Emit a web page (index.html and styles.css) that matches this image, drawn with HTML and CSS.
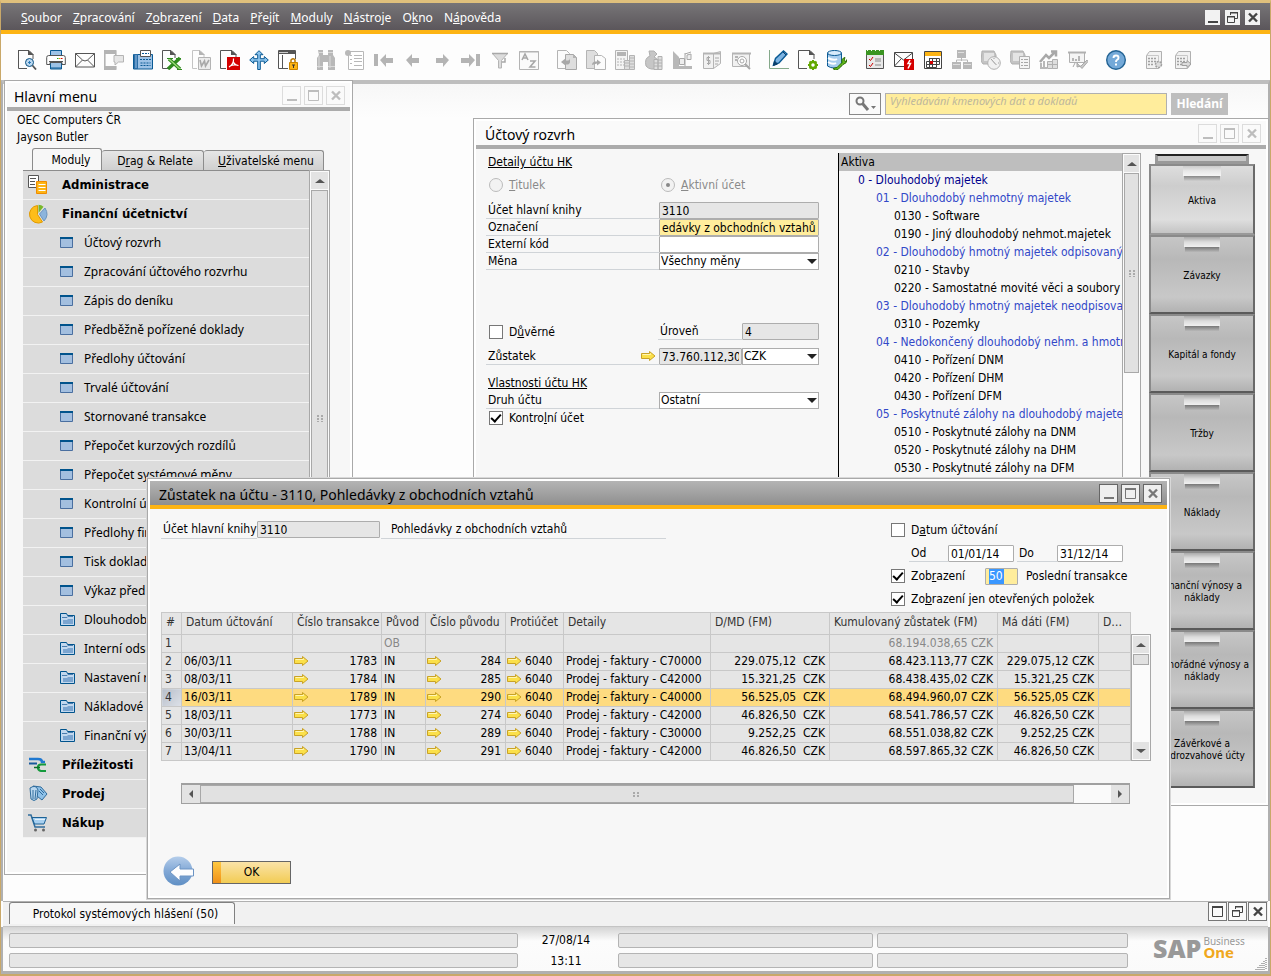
FILE: index.html
```html
<!DOCTYPE html>
<html lang="cs">
<head>
<meta charset="utf-8">
<title>SAP Business One</title>
<link rel="stylesheet" href="styles.css">
</head>
<body>
<svg class="defs" aria-hidden="true">
  <symbol id="arrow" viewBox="0 0 15 10"><path d="M.5 2.500h8V.500L14 5l-5.500 4.500v-2h-8z" fill="#fbe04a" stroke="#c9a227"/><path d="M1.500 3.500h8V2.500" fill="none" stroke="#fff6b5"/></symbol>
  <symbol id="win" viewBox="0 0 14 12"><path d="M.5.5h12v10H.5z" fill="#a3bfdf" stroke="#4a6fa0"/><path d="M0 0h13v2H0z" fill="#00538c"/></symbol>
  <symbol id="folder" viewBox="0 0 16 14"><path d="M.5 12.500V.5h6l1 2h7v10z" fill="#c2d8ee" stroke="#00538c"/><path d="M2 4.500h5l1-1h5" fill="none" stroke="#4a7dae"/><path d="M3 7h4l1-1h5v5H3z" fill="#7ba5d0"/></symbol>
  <symbol id="min" viewBox="0 0 15 15"><path d="M3 11h10v2H3z" fill="currentColor"/></symbol>
  <symbol id="max" viewBox="0 0 15 15"><path d="M2.500 2.500h10v10h-10z" fill="none" stroke="currentColor"/><path d="M2 2h11v2H2z" fill="currentColor"/></symbol>
  <symbol id="restore" viewBox="0 0 15 15"><path d="M5.500 5V2.500h7v6H10M2.500 6.500h7v6h-7z" fill="none" stroke="currentColor"/><path d="M5 2h8v1.500H5zM2 6h8v1.500H2z" fill="currentColor"/></symbol>
  <symbol id="close" viewBox="0 0 15 15"><path d="M4 3.500l8 8M12 3.500l-8 8" stroke="currentColor" stroke-width="2.400"/></symbol>
</svg>

<div class="app">
  <header class="menubar">
    <nav class="menus" aria-label="Hlavní nabídka">
      <button><u>S</u>oubor</button><button><u>Z</u>pracování</button><button>Z<u>o</u>brazení</button><button><u>D</u>ata</button><button><u>P</u>řejít</button><button><u>M</u>oduly</button><button><u>N</u>ástroje</button><button>O<u>k</u>no</button><button>N<u>á</u>pověda</button>
    </nav>
    <div class="winbtns dark">
      <button aria-label="Minimalizovat"><svg><use href="#min"/></svg></button>
      <button aria-label="Obnovit"><svg><use href="#restore"/></svg></button>
      <button aria-label="Zavřít"><svg><use href="#close"/></svg></button>
    </div>
  </header>

  <div class="toolbar" role="toolbar" aria-label="Nástroje">
    <div class="group">
      <button aria-label="Náhled"><svg viewBox="0 0 20 20"><path d="M1 .5h11l4 4V9M1.500 0v18.500H10" fill="none" stroke="#555"/><path d="M11 0v5h6z" fill="#555"/><circle cx="12.500" cy="12.500" r="4" fill="#bcd8f0" stroke="#0a4f80"/><path d="M11 12.500h3M12.500 11v3" stroke="#2c7bb8"/><path d="M15.500 15.500l3.500 4" stroke="#555" stroke-width="1.800"/></svg></button>
      <button aria-label="Tisk"><svg viewBox="0 0 20 20"><path d="M4.500 6V.5h11V6M4.500 13v6h11v-6" fill="#9cc2e6" stroke="#0a5a94"/><path d="M.7 7.500q0-2 2-2h14.600q2 0 2 2v7H16v-2H4v2H.7z" fill="#fff" stroke="#555"/><path d="M3 11.500h14" stroke="#555"/><path d="M11 8.500h1.500" stroke="#2a2"/><path d="M13 8.500h1.500" stroke="#e80"/><path d="M15 8.500h1.500" stroke="#d00"/><path d="M5 18h10" stroke="#0a5a94"/></svg></button>
      <button aria-label="E-mail"><svg viewBox="0 0 20 20"><path d="M.5 3.500h19v13.500H.5zM.5 3.500l7 6.500q2.500 2 5 0l7-6.500M.5 17l7-7M19.500 17l-7-7" fill="none" stroke="#555"/></svg></button>
      <button aria-label="SMS"><svg viewBox="0 0 20 20"><path d="M.8 1h11v4M.8 1v18h11v-3" fill="none" stroke="#b4b4b4" stroke-width="1.600"/><path d="M0 0h12v4H0zM0 16h12v4H0z" fill="#b4b4b4"/><path d="M11 5.500h8.500V12h-5L11 15v-3h-1V5.500z" fill="#e6e6e6" stroke="#b4b4b4"/></svg></button>
      <button aria-label="Fax"><svg viewBox="0 0 20 20"><path d="M.5 4.500h19V19H.5z" fill="#9cc2e6" stroke="#0a5a94"/><path d="M1 4h4v15H1z" fill="#2c6fa8"/><path d="M3 5v13" stroke="#9cc2e6"/><path d="M7.500 6.500v-6h10v6z" fill="#fff" stroke="#555"/><path d="M9 3.500h7M7 9.500h11M7.500 13h10M7.500 15.500h10" stroke="#0a5a94" stroke-dasharray="2 1"/></svg></button>
      <button aria-label="Excel"><svg viewBox="0 0 20 20"><path d="M6 18.500H.5V.5H9l4 4V8" fill="none" stroke="#555"/><path d="M8 0v5h6z" fill="#555"/><path d="M7 9l11 10M18 8L6 19" stroke="#2f8a1f" stroke-width="3.500"/><path d="M7 9l11 10" stroke="#9fdc7c" stroke-width="1.300"/><path d="M5 8.500h6M15 19.500h5M14 8.500h5" stroke="#2f8a1f"/></svg></button>
      <button aria-label="Word"><svg viewBox="0 0 20 20"><path d="M6 18.500H1.500V.5H9l4 4V7" fill="none" stroke="#c4c4c4"/><path d="M8 0v5h6z" fill="#b4b4b4"/><path d="M7.500 7.500h12v12h-12z" fill="#ececec" stroke="#b4b4b4"/><path d="M9 10l1.500 6 3-5 1 5 3.500-6" fill="none" stroke="#a8a8a8" stroke-width="1.600"/></svg></button>
      <button aria-label="PDF"><svg viewBox="0 0 20 20"><path d="M6 18.500H.5V.5H12l4 4V7" fill="none" stroke="#555"/><path d="M11 0v5h6z" fill="#555"/><path d="M7 7h13v13H7z" fill="#d40000"/><path d="M9 17q5-3 4.500-8.500M13 11q1 4 5.500 4.500M10 16q4-2 8-.7" fill="none" stroke="#fff" stroke-width="1.200"/></svg></button>
      <button aria-label="Přesunout"><svg viewBox="0 0 20 20"><path d="M10 .7l4 4h-2.700v4h4V6.500l4 3.500-4 3.500v-2.300h-4V16v3.500H8.700v-8.300h-4v2.300L.7 10l4-3.500v2.200h4v-4H6z" fill="#8cc4ee" stroke="#0a5a94"/></svg></button>
      <button aria-label="Uzamknout"><svg viewBox="0 0 20 20"><path d="M.5.5h17v18H.5z" fill="#fff" stroke="#555"/><path d="M1 1h17v3H1z" fill="#555"/><path d="M1 2.500h9" stroke="#ccc"/><path d="M4.500 5v13" stroke="#555"/><path d="M10 9h10v11H10z" fill="#fdfdfd"/><path d="M13 13v-3q2.500-2.500 4 0v3" fill="none" stroke="#b87700" stroke-width="1.500"/><path d="M11.500 12.500h8v7h-8z" fill="#fdb414" stroke="#c88400"/><path d="M14 15h3M15.500 15v3" stroke="#333"/></svg></button>
    </div>
    <div class="group off">
      <button disabled aria-label="Najít"><svg viewBox="0 0 20 20"><path d="M2 0h5v5h5V0h5v5l2 3v12h-7v-8H7v8H1V8l2-3z" fill="#b8b8b8"/><path d="M3 6v12M14 6v12M2 2.500h5M12 2.500h5M1 16.500h6M12 16.500h7" stroke="#dadada"/></svg></button>
      <button disabled aria-label="Seznam"><svg viewBox="0 0 20 20"><path d="M3.500 1.500h15v18h-15z" fill="#fff" stroke="#b8b8b8"/><path d="M5 5.500h2M5 9.500h2M5 13.500h2M9 5.500h8M9 8.500h8M9 11.500h8M9 15.500h8" stroke="#b8b8b8"/><circle cx="3" cy="3" r="3" fill="#b8b8b8"/></svg></button>
      <button disabled aria-label="První"><svg viewBox="0 0 20 20"><path d="M0 4h4v12H0zM6 10l6-6v4h7v5h-7v4z" fill="#b4b4b4"/></svg></button>
      <button disabled aria-label="Předchozí"><svg viewBox="0 0 20 20"><path d="M3 10l6-6v4h7v5H9v4z" fill="#b4b4b4"/></svg></button>
      <button disabled aria-label="Další"><svg viewBox="0 0 20 20"><path d="M17 10l-6-6v4H4v5h7v4z" fill="#b4b4b4"/></svg></button>
      <button disabled aria-label="Poslední"><svg viewBox="0 0 20 20"><path d="M19 4h-4v12h4zM14 10L8 4v4H0v5h8v4z" fill="#b4b4b4"/></svg></button>
      <button disabled aria-label="Filtr"><svg viewBox="0 0 20 20"><path d="M2.500 3.500h15l-6 7V18h-3v-7.500z" fill="#dcdcdc" stroke="#b4b4b4"/><path d="M2 3.500h16M12 12h3V8" stroke="#a8a8a8" stroke-width="1.500" fill="none"/></svg></button>
      <button disabled aria-label="Řadit"><svg viewBox="0 0 20 20"><path d="M.5 1.500h19v18H.5z" fill="#fafafa" stroke="#b4b4b4"/><path d="M0 2h20" stroke="#b4b4b4"/><path d="M3 10l3-6 3 6M4 8h4M11 11h5l-5 6h5.500" fill="none" stroke="#a8a8a8" stroke-width="1.600"/></svg></button>
    </div>
    <div class="group off">
      <button disabled aria-label="Základní doklad"><svg viewBox="0 0 20 20"><path d="M.5.5h9l3 3V18.500H.5z" fill="#fbfbfb" stroke="#b4b4b4"/><path d="M8.500 4.500h8l3 3v12h-11z" fill="#dedede" stroke="#a8a8a8"/><path d="M16 4v4h4z" fill="#b4b4b4"/><path d="M4 12l5-4v2.500h2q2 0 2-3v5q-1 2-2 2H9V16z" fill="#a8a8a8"/></svg></button>
      <button disabled aria-label="Cílový doklad"><svg viewBox="0 0 20 20"><path d="M.5.5h8l3 3v15H.5z" fill="#dedede" stroke="#b4b4b4"/><path d="M8.500 5.500h7l4 3v11h-11z" fill="#fbfbfb" stroke="#b4b4b4"/><path d="M6 15q0-3 3-3.500h2v-2l4 3-4 3v-2z" fill="#a8a8a8"/></svg></button>
      <button disabled aria-label="Hrubý zisk"><svg viewBox="0 0 20 20"><path d="M.5.5h12v19H.5z" fill="#f4f4f4" stroke="#b4b4b4"/><path d="M2 2h9v4H2z" fill="#b4b4b4"/><path d="M2 9h8M2 12h8M2 15h8" stroke="#b4b4b4" stroke-dasharray="2 1"/><path d="M9.500 10.500h5v9h-5zM14.500 5.500h5v14h-5z" fill="#dedede" stroke="#b4b4b4"/><path d="M10 13h4M10 16h4M15 8h4M15 11h4M15 14h4M15 17h4" stroke="#b4b4b4"/></svg></button>
      <button disabled aria-label="Platební prostředky"><svg viewBox="0 0 20 20"><path d="M5 1h5l3 3-3 3q6 2 5 11-9 3-13-2Q0 8 6 6z" fill="#c6c6c6" stroke="#b0b0b0"/><path d="M10 9.500h4v10h-4zM14 6.500h4v13h-4z" fill="#dedede" stroke="#b0b0b0"/><path d="M10 13h4M10 16h4M14 10h4M14 13h4M14 16h4" stroke="#b0b0b0"/></svg></button>
      <button disabled aria-label="Objem a hmotnost"><svg viewBox="0 0 20 20"><path d="M0 1l6 6v9h13v3H0z" fill="#b8b8b8"/><path d="M6.500 8.500h5v6h-5zM12 3v13M12 4l6-2M14 9.500V5l4-1v5.500z" fill="#eee" stroke="#a8a8a8"/></svg></button>
      <button disabled aria-label="Účet"><svg viewBox="0 0 20 20"><path d="M1.500 3.500h10v15h-10zM11.500 3.500l7-2v12l-7 5z" fill="#f1f1f1" stroke="#b4b4b4"/><path d="M1 3.500h18" stroke="#b4b4b4" stroke-width="2"/><path d="M8 7.500H5v3h3v3H5M6.500 6v9M13 8h4M13 11h4M13 14h3" fill="none" stroke="#a8a8a8"/></svg></button>
      <button disabled aria-label="Plán plateb"><svg viewBox="0 0 20 20"><path d="M1.500 3.500h17v13h-17z" fill="#f1f1f1" stroke="#b4b4b4"/><path d="M1 3.500h19M4 7h3M4 10h2" stroke="#b4b4b4" stroke-width="2"/><circle cx="11" cy="11" r="4.500" fill="#fff" stroke="#a8a8a8"/><circle cx="11" cy="11" r="2" fill="none" stroke="#a8a8a8"/><path d="M14 14l5 5" stroke="#a8a8a8" stroke-width="2"/></svg></button>
    </div>
    <div class="group">
      <button aria-label="Upravit"><svg viewBox="0 0 20 20"><path d="M.5 0v18.500H20" fill="none" stroke="#85a98a"/><path d="M4.500 15l2-6.500 8-7.500 3.500 3-8 9z" fill="#7db3e2" stroke="#0a5a94" stroke-width="1.400"/><path d="M4.500 15.500l1-4.500 3 3zM14 2l3 3" fill="#0a3f6c" stroke="#0a3f6c"/></svg></button>
      <button aria-label="Nastavení formuláře"><svg viewBox="0 0 20 20"><path d="M9 18.500H.5V.5H12l4 4V9" fill="none" stroke="#555"/><path d="M11 0v5h6z" fill="#555"/><circle cx="15" cy="15" r="3" fill="#fff" stroke="#62a800" stroke-width="2.500"/><path d="M15 10v2M15 18v2M10 15h2M18 15h2M11.500 11.500l1.500 1.500M17 17l1.500 1.500M18.500 11.500L17 13M13 17l-1.500 1.500" stroke="#62a800" stroke-width="2"/></svg></button>
      <button aria-label="Správce dotazů"><svg viewBox="0 0 20 20"><path d="M.5 3v13q6 4 14 0V3" fill="#a7cdee" stroke="#0a5a94"/><ellipse cx="7.500" cy="3" rx="7" ry="2.500" fill="#d7ebfb" stroke="#0a5a94"/><path d="M1 8q6 3 9 1M1 12q5 3 8 1" fill="none" stroke="#fff" stroke-width="2"/><path d="M6 18.500l4-1 5-5q-1-4 3-5l-1 3 2 1 1-2q0 4-4 5l-5 5q-3 2-5-1z" fill="#62b81c" stroke="#2d6e05"/></svg></button>
    </div>
    <div class="group">
      <button aria-label="Kalendář úkolů"><svg viewBox="0 0 20 20"><path d="M1.500 3.500h17v15h-17z" fill="#e8e8e8" stroke="#555"/><path d="M1 0h18v5H1z" fill="#3b9522"/><path d="M2 .5h16" stroke="#f6fff0" stroke-dasharray="1 3"/><path d="M4 9l1.500 1.500L8 7M4 15l1.500 1.500L8 13" fill="none" stroke="#c00"/><path d="M10 9h6M10 11h6M10 15h6" stroke="#888"/></svg></button>
      <button aria-label="Zprávy"><svg viewBox="0 0 20 20"><path d="M.5 2.500h18v14H.5zM.5 3l9 7 9-7M.5 16l6.500-7" fill="#fff" stroke="#444"/><path d="M10 9h10v11H10z" fill="#d40000"/><path d="M16 10l-2 3.500h2.500L14 18.500" fill="none" stroke="#fff" stroke-width="1.500"/></svg></button>
      <button aria-label="Kalendář"><svg viewBox="0 0 20 20"><path d="M1.500 1.500h17v17h-17z" fill="#fff" stroke="#444"/><path d="M2 2h16v4H2z" fill="#fdb414"/><path d="M6.500 8.500h10v3h-10zM3.500 11.500h13v3h-13zM3.500 14.500h10v3h-10zM9.500 8v9M13.500 8v9M6.500 8v9" fill="none" stroke="#444"/><path d="M7 11h3v3H7z" fill="#d40000"/></svg></button>
      <button disabled aria-label="Struktura"><svg viewBox="0 0 20 20"><path d="M5 0h9v8H5zM0 12h9v7H0zM11 12h9v7h-9z" fill="#b8b8b8"/><path d="M9.500 8v3M4.500 12v-2h11v2" fill="none" stroke="#b8b8b8"/><path d="M6 2.500h6M1 14.500h7M12 14.500h7" stroke="#dedede"/></svg></button>
      <button disabled aria-label="Panel"><svg viewBox="0 0 20 20"><path d="M1 1h12l2 4v9H2L0 11z" fill="#c4c4c4" stroke="#b0b0b0"/><path d="M3 3h10v8H3z" fill="#e4e4e4"/><circle cx="13" cy="13" r="6.300" fill="#f1f1f1" stroke="#b0b0b0"/><path d="M10 9l3.500 4 2 2M13 8v1M18 13h-1" stroke="#a0a0a0"/></svg></button>
      <button disabled aria-label="Dotazy"><svg viewBox="0 0 20 20"><path d="M1 1h12l2 4v9H2L0 11z" fill="#c4c4c4" stroke="#b0b0b0"/><path d="M3 3h10v8H3z" fill="#e4e4e4"/><path d="M9.500 6.500h10v12h-10z" fill="#f4f4f4" stroke="#b0b0b0"/><path d="M11 9.500h2M14 9.500h4M11 12.500h2M14 12.500h4M11 15.500h2M14 15.500h4" stroke="#a8a8a8"/></svg></button>
      <button disabled aria-label="Analýza"><svg viewBox="0 0 20 20"><path d="M1 12L7 5l3 3 6-6M12 1.500h5v5" fill="none" stroke="#a8a8a8" stroke-width="2.500"/><path d="M2 13v5h6M5 11v7" stroke="#b8b8b8" stroke-width="2" fill="none"/><path d="M8.500 11.500h5v7h-5zM13.500 9.500h5v9h-5z" fill="#dedede" stroke="#b0b0b0"/><path d="M9 14.500h9" stroke="#b0b0b0"/></svg></button>
      <button disabled aria-label="Prezentace"><svg viewBox="0 0 20 20"><path d="M1.500 2.500h15v10h-15z" fill="#f4f4f4" stroke="#b0b0b0"/><path d="M0 2.500h18" stroke="#b0b0b0" stroke-width="2"/><path d="M5 8v3M8 9v2M11 6v5" stroke="#a0a0a0" stroke-width="1.500"/><path d="M7 13l-2 4M9 13v4l4-1 6-6 1 1.500-6 7z" fill="#c8c8c8" stroke="#a8a8a8"/></svg></button>
    </div>
    <div class="group">
      <button aria-label="Nápověda"><svg viewBox="0 0 20 20"><circle cx="10" cy="10" r="9.300" fill="#74a9d8" stroke="#236394" stroke-width="1.400"/><path d="M7.500 8q0-2.500 2.500-2.500t2.500 2.200q0 1.300-1.300 2.100T10 12" fill="none" stroke="#fff" stroke-width="1.900"/><path d="M9 13.500h2v2H9z" fill="#fff"/></svg></button>
    </div>
    <div class="group">
      <button aria-label="Nastavení modulu"><svg viewBox="0 0 20 20"><path d="M2.500 5.500l3-4h12v13l-3 4h-12z" fill="#f2f2f2" stroke="#b0b0b0"/><path d="M3 5.500h11.500v12" fill="none" stroke="#c8c8c8"/><path d="M4 8.500h9M4 11.500h9M4 14.500h6" stroke="#a0a0a0" stroke-width="1.500" stroke-dasharray="2 1"/><circle cx="14.500" cy="14.500" r="3" fill="#ddd" stroke="#a0a0a0" stroke-width="1.500" stroke-dasharray="2 1"/></svg></button>
      <button aria-label="Export modulu"><svg viewBox="0 0 20 20"><path d="M2.500 5.500l3-4h12v13l-3 4h-12z" fill="#f2f2f2" stroke="#b0b0b0"/><path d="M3 5.500h11.500v12" fill="none" stroke="#c8c8c8"/><path d="M4 8.500h9M4 11.500h9M4 14.500h5" stroke="#a0a0a0" stroke-width="1.500" stroke-dasharray="2 1"/><path d="M9 12.500h5v-2l4 3.500-4 3.500v-2H9z" fill="#ddd" stroke="#a0a0a0"/></svg></button>
    </div>
  </div>

  <main class="desktop">
    <form class="search" role="search">
      <button type="button" class="lens" aria-label="Rozsah hledání"><svg viewBox="0 0 24 18"><circle cx="7" cy="6" r="3.500" fill="none" stroke="#777" stroke-width="2"/><path d="M9.500 8.500L15 15" stroke="#777" stroke-width="3"/><path d="M18 11h5l-2.500 3z" fill="#777"/></svg></button>
      <input type="text" aria-label="Hledaný výraz" placeholder="Vyhledávání kmenových dat a dokladů">
      <button type="button" class="go">Hledání</button>
    </form>

    <section class="window main-menu">
      <div class="titlebar"><h2>Hlavní menu</h2>
        <div class="winbtns light"><button aria-label="Minimalizovat"><svg><use href="#min"/></svg></button><button aria-label="Maximalizovat"><svg><use href="#max"/></svg></button><button aria-label="Zavřít"><svg><use href="#close"/></svg></button></div>
      </div>
      <div class="who">OEC Computers ČR<br>Jayson Butler</div>
      <div class="tabs" role="tablist">
        <button role="tab" class="tab on t1" aria-selected="true">Modu<u>l</u>y</button><button role="tab" class="tab t2">D<u>r</u>ag &amp; Relate</button><button role="tab" class="tab t3"><u>U</u>živatelské menu</button>
      </div>
      <div class="modules">
        <ul>
          <li><button class="mod"><svg viewBox="0 0 20 20"><path d="M.5.5h10v12H.5z" fill="#fff" stroke="#555"/><path d="M2 3.500h6M2 6.500h5M2 9.500h5" stroke="#555"/><path d="M8.500 6.500h10v12h-10z" fill="#fdb414" stroke="#f08c00"/><path d="M10.500 9.500h7M10.500 12.500h7M10.500 15.500h7" stroke="#fff"/></svg>Administrace</button></li>
          <li><button class="mod"><svg viewBox="0 0 20 20"><path d="M9.500 10.500V1.500A8.800 8.800 0 1 0 14.500 18z" fill="#fdbd1a" stroke="#e09a00"/><path d="M10.500 9V.8q3 0 5 2z" fill="#78b82a"/><path d="M11.500 10L17 4q4.500 7-1 13z" fill="#8cb4dc" stroke="#6a94be"/></svg>Finanční účetnictví</button></li>
          <li><button><svg class="w"><use href="#win"/></svg>Účtový rozvrh</button></li>
          <li><button><svg class="w"><use href="#win"/></svg>Zpracování účtového rozvrhu</button></li>
          <li><button><svg class="w"><use href="#win"/></svg>Zápis do deníku</button></li>
          <li><button><svg class="w"><use href="#win"/></svg>Předběžně pořízené doklady</button></li>
          <li><button><svg class="w"><use href="#win"/></svg>Předlohy účtování</button></li>
          <li><button><svg class="w"><use href="#win"/></svg>Trvalé účtování</button></li>
          <li><button><svg class="w"><use href="#win"/></svg>Stornované transakce</button></li>
          <li><button><svg class="w"><use href="#win"/></svg>Přepočet kurzových rozdílů</button></li>
          <li><button><svg class="w"><use href="#win"/></svg>Přepočet systémové měny</button></li>
          <li><button><svg class="w"><use href="#win"/></svg>Kontrolní účty</button></li>
          <li><button><svg class="w"><use href="#win"/></svg>Předlohy finančních výkazů</button></li>
          <li><button><svg class="w"><use href="#win"/></svg>Tisk dokladů</button></li>
          <li><button><svg class="w"><use href="#win"/></svg>Výkaz předkontací</button></li>
          <li><button><svg class="f"><use href="#folder"/></svg>Dlouhodobý majetek</button></li>
          <li><button><svg class="f"><use href="#folder"/></svg>Interní odsouhlasení</button></li>
          <li><button><svg class="f"><use href="#folder"/></svg>Nastavení rozpočtu</button></li>
          <li><button><svg class="f"><use href="#folder"/></svg>Nákladové účetnictví</button></li>
          <li><button><svg class="f"><use href="#folder"/></svg>Finanční výkazy</button></li>
          <li><button class="mod"><svg viewBox="0 0 20 20"><path d="M1 8.500h8" stroke="#1a5a9c" stroke-width="2"/><path d="M1 4h9q4 0 4 3h3" fill="none" stroke="#1f78d0" stroke-width="2.500"/><path d="M18 9.500h-5q-3 0-3 3t3 3.500h5" fill="none" stroke="#149a3c" stroke-width="2.200"/><path d="M6 12.500h6" stroke="#0e6e2a" stroke-width="1.500"/></svg>Příležitosti</button></li>
          <li><button class="mod"><svg viewBox="0 0 20 20"><path d="M5 2l8 1 6 7-5 6-9-7z" fill="#8fc1e8" stroke="#2f6c9c"/><path d="M2 4q6-4 8 2l-1 9q-3 3-6 0z" fill="#b9d7ef" stroke="#2f6c9c"/><path d="M5 6v9M8 6l-1 9M11 7l4 4M12 5l4 4" stroke="#2f6c9c"/></svg>Prodej</button></li>
          <li><button class="mod"><svg viewBox="0 0 20 20"><path d="M0 2h3l4 12h10" fill="none" stroke="#2f6c9c" stroke-width="1.500"/><path d="M4 4.500h14.500L16 11H6.500z" fill="#a8d0f0" stroke="#1c6296"/><path d="M7 6.500h10" stroke="#e4f2fc"/><circle cx="7.500" cy="17" r="1.500" fill="#666"/><circle cx="15.500" cy="17" r="1.500" fill="#666"/></svg>Nákup</button></li>
        </ul>
        <div class="vscroll"><button class="up" aria-label="Nahoru"></button><div class="thumb tall"><i class="grip"></i></div></div>
      </div>
    </section>

    <section class="window accounts">
      <div class="titlebar"><h2>Účtový rozvrh</h2>
        <div class="winbtns light"><button aria-label="Minimalizovat"><svg><use href="#min"/></svg></button><button aria-label="Maximalizovat"><svg><use href="#max"/></svg></button><button aria-label="Zavřít"><svg><use href="#close"/></svg></button></div>
      </div>
      <div class="accounts-body">
        <form class="details">
          <h3><u>Detaily účtu HK</u></h3>
          <div class="row radios"><label class="half"><input type="radio" name="kind" disabled><span><u>T</u>itulek</span></label><label><input type="radio" name="kind" checked disabled><span><u>A</u>ktivní účet</span></label></div>
          <div class="row"><label class="lab" for="gl">Účet hlavní knihy</label><input id="gl" class="box ro" value="3110" readonly></div>
          <div class="row"><label class="lab" for="nm">Označení</label><input id="nm" class="box hot" value="edávky z obchodních vztahů"></div>
          <div class="row"><label class="lab" for="ext">Externí kód</label><input id="ext" class="box"></div>
          <div class="row"><label class="lab" for="cur">Měna</label><span class="select"><select id="cur"><option>Všechny měny</option></select></span></div>
          <div class="row level"><label class="half"><input type="checkbox"><span>D<u>ů</u>věrné</span></label><label class="lab" for="lvl">Úroveň</label><input id="lvl" class="box ro" value="4" readonly></div>
          <div class="row balance"><label class="lab" for="bal">Zůstatek<svg class="arr"><use href="#arrow"/></svg></label><input id="bal" class="box ro amount" value="73.760.112,30" readonly><span class="select"><select aria-label="Měna zůstatku"><option>CZK</option></select></span></div>
          <h3 class="props"><u>Vlastnosti účtu HK</u></h3>
          <div class="row"><label class="lab" for="typ">Druh účtu</label><span class="select"><select id="typ"><option>Ostatní</option></select></span></div>
          <div class="row"><label class="half"><input type="checkbox" checked><span>Kontro<u>l</u>ní účet</span></label></div>
        </form>
        <div class="tree">
          <ul>
            <li class="l0">Aktiva</li>
            <li class="l1">0 - Dlouhodobý majetek</li>
            <li class="l2">01 - Dlouhodobý nehmotný majetek</li>
            <li class="l3">0130 - Software</li>
            <li class="l3">0190 - Jiný dlouhodobý nehmot.majetek</li>
            <li class="l2">02 - Dlouhodobý hmotný majetek odpisovaný</li>
            <li class="l3">0210 - Stavby</li>
            <li class="l3">0220 - Samostatné movité věci a soubory</li>
            <li class="l2">03 - Dlouhodobý hmotný majetek neodpisovaný</li>
            <li class="l3">0310 - Pozemky</li>
            <li class="l2">04 - Nedokončený dlouhodobý nehm. a hmotný majetek</li>
            <li class="l3">0410 - Pořízení DNM</li>
            <li class="l3">0420 - Pořízení DHM</li>
            <li class="l3">0430 - Pořízení DFM</li>
            <li class="l2">05 - Poskytnuté zálohy na dlouhodobý majetek</li>
            <li class="l3">0510 - Poskytnuté zálohy na DNM</li>
            <li class="l3">0520 - Poskytnuté zálohy na DHM</li>
            <li class="l3">0530 - Poskytnuté zálohy na DFM</li>
          </ul>
          <div class="vscroll"><button class="up" aria-label="Nahoru"></button><div class="thumb mid"><i class="grip"></i></div></div>
        </div>
        <div class="drawers">
          <div class="lid"></div>
          <button class="open">Aktiva</button><button>Závazky</button><button>Kapitál a fondy</button><button>Tržby</button><button>Náklady</button><button>Finanční výnosy a náklady</button><button>Mimořádné výnosy a náklady</button><button>Závěrkové a podrozvahové účty</button>
        </div>
      </div>
    </section>

    <section class="window dialog">
      <div class="titlebar active"><h2>Zůstatek na účtu - 3110, Pohledávky z obchodních vztahů</h2>
        <div class="winbtns mid"><button aria-label="Minimalizovat"><svg><use href="#min"/></svg></button><button aria-label="Maximalizovat"><svg><use href="#max"/></svg></button><button aria-label="Zavřít"><svg><use href="#close"/></svg></button></div>
      </div>
      <div class="dialog-body">
        <div class="filters">
          <div class="account"><label class="lab" for="acc">Účet hlavní knihy</label><input id="acc" class="box ro" value="3110" readonly><span class="name">Pohledávky z obchodních vztahů</span></div>
          <div class="options">
            <label class="opt"><input type="checkbox"><span>D<u>a</u>tum účtování</span></label>
            <div class="dates"><label class="lab" for="od">Od</label><input id="od" class="box" value="01/01/14"><label class="lab" for="do">Do</label><input id="do" class="box" value="31/12/14"></div>
            <div class="opt last"><label><input type="checkbox" checked><span>Zob<u>r</u>azení</span></label><input id="cnt" class="box count" value="50"><label for="cnt">Poslední transakce</label></div>
            <label class="opt"><input type="checkbox" checked><span>Zo<u>b</u>razení jen otevřených položek</span></label>
          </div>
        </div>
        <div class="grid">
          <table>
            <colgroup><col class="c1"><col class="c2"><col class="c3"><col class="c4"><col class="c5"><col class="c6"><col class="c7"><col class="c8"><col><col class="c10"><col class="c11"></colgroup>
            <thead><tr><th>#</th><th>Datum účtování</th><th>Číslo transakce</th><th>Původ</th><th>Číslo původu</th><th>Protiúčet</th><th>Detaily</th><th>D/MD (FM)</th><th>Kumulovaný zůstatek (FM)</th><th>Má dáti (FM)</th><th>D…</th></tr></thead>
            <tbody>
              <tr class="dim"><td>1</td><td></td><td></td><td>OB</td><td></td><td></td><td></td><td></td><td class="n">68.194.038,65 CZK</td><td></td><td></td></tr>
              <tr><td>2</td><td>06/03/11</td><td class="n"><svg class="arr"><use href="#arrow"/></svg>1783</td><td>IN</td><td class="n"><svg class="arr"><use href="#arrow"/></svg>284</td><td><svg class="arr"><use href="#arrow"/></svg>6040</td><td>Prodej - faktury - C70000</td><td class="n">229.075,12&nbsp; CZK</td><td class="n">68.423.113,77 CZK</td><td class="n">229.075,12 CZK</td><td></td></tr>
              <tr><td>3</td><td>08/03/11</td><td class="n"><svg class="arr"><use href="#arrow"/></svg>1784</td><td>IN</td><td class="n"><svg class="arr"><use href="#arrow"/></svg>285</td><td><svg class="arr"><use href="#arrow"/></svg>6040</td><td>Prodej - faktury - C42000</td><td class="n">15.321,25&nbsp; CZK</td><td class="n">68.438.435,02 CZK</td><td class="n">15.321,25 CZK</td><td></td></tr>
              <tr class="sel"><td>4</td><td>16/03/11</td><td class="n"><svg class="arr"><use href="#arrow"/></svg>1789</td><td>IN</td><td class="n"><svg class="arr"><use href="#arrow"/></svg>290</td><td><svg class="arr"><use href="#arrow"/></svg>6040</td><td>Prodej - faktury - C40000</td><td class="n">56.525,05&nbsp; CZK</td><td class="n">68.494.960,07 CZK</td><td class="n">56.525,05 CZK</td><td></td></tr>
              <tr><td>5</td><td>18/03/11</td><td class="n"><svg class="arr"><use href="#arrow"/></svg>1773</td><td>IN</td><td class="n"><svg class="arr"><use href="#arrow"/></svg>274</td><td><svg class="arr"><use href="#arrow"/></svg>6040</td><td>Prodej - faktury - C42000</td><td class="n">46.826,50&nbsp; CZK</td><td class="n">68.541.786,57 CZK</td><td class="n">46.826,50 CZK</td><td></td></tr>
              <tr><td>6</td><td>30/03/11</td><td class="n"><svg class="arr"><use href="#arrow"/></svg>1788</td><td>IN</td><td class="n"><svg class="arr"><use href="#arrow"/></svg>289</td><td><svg class="arr"><use href="#arrow"/></svg>6040</td><td>Prodej - faktury - C30000</td><td class="n">9.252,25&nbsp; CZK</td><td class="n">68.551.038,82 CZK</td><td class="n">9.252,25 CZK</td><td></td></tr>
              <tr><td>7</td><td>13/04/11</td><td class="n"><svg class="arr"><use href="#arrow"/></svg>1790</td><td>IN</td><td class="n"><svg class="arr"><use href="#arrow"/></svg>291</td><td><svg class="arr"><use href="#arrow"/></svg>6040</td><td>Prodej - faktury - C42000</td><td class="n">46.826,50&nbsp; CZK</td><td class="n">68.597.865,32 CZK</td><td class="n">46.826,50 CZK</td><td></td></tr>
            </tbody>
          </table>
          <div class="vscroll"><button class="up" aria-label="Nahoru"></button><div class="thumb tiny"></div><button class="down" aria-label="Dolů"></button></div>
        </div>
        <div class="hscroll"><button class="left" aria-label="Doleva"></button><div class="hthumb"><i class="grip wide"></i></div><button class="right" aria-label="Doprava"></button></div>
        <div class="actions">
          <button class="back" aria-label="Zpět"><svg viewBox="0 0 32 32"><defs><linearGradient id="ball" x2="0" y2="1"><stop offset="0" stop-color="#b4cdea"/><stop offset=".5" stop-color="#82a8d6"/><stop offset="1" stop-color="#5f8fc4"/></linearGradient></defs><circle cx="16" cy="15" r="14.500" fill="url(#ball)"/><path d="M8 16l10-8v5h13.500v7H18v5z" fill="#fdfdfe" stroke="#6c94c4"/></svg></button>
          <button class="ok">OK</button>
        </div>
      </div>
    </section>
  </main>

  <div class="messages">
    <button class="log">Protokol systémových hlášení (50)</button>
    <div class="winbtns box3"><button aria-label="Maximalizovat"><svg><use href="#max"/></svg></button><button aria-label="Obnovit"><svg><use href="#restore"/></svg></button><button aria-label="Zavřít"><svg><use href="#close"/></svg></button></div>
  </div>
  <footer class="status">
    <div class="s1"><i></i><i></i></div>
    <div class="clock"><span>27/08/14</span><span>13:11</span></div>
    <div class="s2"><i></i><i></i></div>
    <div class="s3"><i></i><i></i></div>
    <div class="logo"><b>SAP</b><span>Business<strong>One</strong></span></div>
    <svg class="resize" viewBox="0 0 12 12"><path d="M11 0v12M9 3v9M7 5v7M5 7v5M3 9v3M1 11v1" stroke="#666" stroke-dasharray="1 1"/></svg>
  </footer>
</div>
</body>
</html>
```

FILE: styles.css
```css
* { box-sizing: border-box; }
body {
  margin: 0;
  font: 12px/16px "DejaVu Sans Condensed", "DejaVu Sans", sans-serif;
  color: #000;
}
button, input, select { font: inherit; color: inherit; margin: 0; padding: 0; border: 0; background: none; border-radius: 0; }
h2, h3, ul { margin: 0; padding: 0; font-weight: normal; font-size: 12px; list-style: none; }
svg { display: block; }
.defs { position: absolute; width: 0; height: 0; }

.app {
  display: flex;
  flex-direction: column;
  min-height: 100vh;
  background: #fdfdfd;
  border: solid #c9a869;
  border-width: 3px 1px 2px;
  border-top-color: #dfc07c;
}

/* Menu bar */
.menubar {
  display: flex;
  justify-content: space-between;
  align-items: center;
  height: 31px;
  padding: 2px 10px 0 20px;
  background: linear-gradient(#777577, #5b565b);
  border-bottom: 4px solid #fdb414;
}
.menus { display: flex; gap: 11px; }
.menus button { color: #fff; font: 12px/20px "Noto Sans", sans-serif; }

.winbtns { display: flex; gap: 3px; }
.winbtns button { width: 19px; height: 19px; display: grid; place-items: center; background: #fafafa; border: 1px solid #dcdcdc; color: #bdbdbd; }
.winbtns svg { width: 15px; height: 15px; }
.winbtns.dark { gap: 5px; }
.winbtns.dark button { width: 15px; height: 15px; border: 0; background: #f2f2f2; color: #444; }
.winbtns.mid button { background: #efefef; border-color: #666; color: #777; }
.winbtns.box3 { gap: 1px; margin-right: 1px; }
.winbtns.box3 button { border-color: #777; color: #444; }

/* Toolbar */
.toolbar { display: flex; gap: 9px; align-items: center; height: 46px; padding: 6px 0 0 11px; }
.group { display: flex; }
.group button { width: 29px; height: 28px; display: grid; place-items: center; }
.group svg { width: 20px; height: 20px; }

/* Workspace */
.desktop {
  position: relative;
  flex: 1;
  min-height: 821px;
  border: solid #b0b0b0;
  border-width: 4px 2px 0;
  border-top-color: #bebebe;
  background: #fdfdfd;
}

.search { display: flex; justify-content: flex-end; gap: 4px; padding: 9px 40px 0 0; height: 34px; background: linear-gradient(#f7f7f7, #fdfdfd); }
.search .lens { width: 32px; height: 22px; display: grid; place-items: center; border: 1px solid #888; background: #fafafa; }
.search .lens svg { width: 24px; height: 18px; }
.search input { width: 282px; height: 22px; padding: 0 4px 6px; border: 1px solid #b0b0b0; background: #ffed9c; }
.search input::placeholder { color: #bdb79c; font: italic 11px "Noto Sans", sans-serif; opacity: 1; }
.search .go { width: 57px; height: 22px; background: #bebebe; color: #fff; font: bold 12px/22px "Noto Sans", sans-serif; }

/* Windows */
.window {
  position: absolute;
  display: flex;
  flex-direction: column;
  padding: 2px;
  border: 1px solid #a9a9a9;
  background: #fff;
}
.window > * { background: #f7f7f7; }
.titlebar { display: flex; justify-content: space-between; align-items: center; height: 28px; flex: none; padding: 3px 5px 0 9px; border-bottom: 4px solid #ababab; background: #fafafa; }
.titlebar h2 { font: 14px/20px "Noto Sans", sans-serif; }
.titlebar .winbtns { margin-bottom: 2px; }
.titlebar.active { border-color: #fdb414; background: linear-gradient(#b4b4b4, #8f8f8f); }

.main-menu { left: 1px; top: -4px; width: 349px; bottom: 26px; }
.main-menu .titlebar { padding-left: 7px; }
.who { padding: 1px 10px 2px; line-height: 17px; }
.tabs { display: flex; align-items: flex-end; padding: 0 0 0 25px; }
.tab { height: 20px; border: 1px solid #8c8c8c; border-left-width: 0; border-bottom: 0; border-radius: 3px 3px 0 0; background: linear-gradient(#e6e6e6, #cfcfcf); }
.tab.on { height: 22px; border-left-width: 1px; background: #f7f7f7; padding-left: 8px; }
.t1 { width: 70px; }
.t2 { width: 102px; padding-left: 5px; }
.t3 { width: 120px; padding-left: 5px; }
.modules { display: flex; flex: 1; padding: 0 20px 34px 16px; align-items: flex-start; }
.modules ul { flex: 1; border-top: 1px solid #8c8c8c; }
.modules li { height: 29px; background: #dcdcdc; border-bottom: 1px solid #f2f2f2; }
.modules li button { display: flex; align-items: center; width: 100%; height: 28px; padding-left: 37px; font-family: "Noto Sans", sans-serif; white-space: nowrap; }
.modules li .mod { padding-left: 5px; font: bold 13px/16px "DejaVu Sans Condensed", "DejaVu Sans", sans-serif; }
.mod svg { width: 20px; height: 20px; margin-right: 14px; }
.modules .w { width: 14px; height: 12px; margin-right: 10px; }
.modules .f { width: 16px; height: 14px; margin-right: 8px; }

/* Scroll bars */
.vscroll { width: 21px; display: flex; flex-direction: column; align-self: stretch; border: 1px solid #a8a8a8; background: #fbfbfb; padding: 1px; }
.vscroll button { height: 17px; flex: none; display: grid; place-items: center; background: #e3e3e3; }
.up::after, .down::after { content: ""; border: solid transparent; border-width: 0 5px 4px; border-bottom-color: #555; }
.down::after { border-width: 4px 5px 0; border-top-color: #555; }
.thumb { display: grid; place-items: center; margin-top: 1px; border: 1px solid #a8a8a8; background: #e1e1e1; }
.tall { height: 456px; }
.mid.thumb { height: 200px; }
.tiny { height: 11px; margin-bottom: auto; }
.grip { display: block; width: 6px; height: 8px; background: repeating-linear-gradient(#e1e1e1 0 1px, transparent 1px 3px), repeating-linear-gradient(90deg, #aaa 0 2px, #e1e1e1 2px 4px); }
.grip.wide { width: 8px; height: 6px; }

/* Chart of accounts */
.accounts { left: 470px; right: -1px; top: 34px; height: 688px; }
.accounts-body { display: flex; flex: 1; padding: 4px 11px 0 10px; }
.details { flex: 1; min-width: 320px; }
h3 { height: 18px; line-height: 18px; padding-left: 2px; }
.row { display: flex; height: 17px; padding-right: 19px; }
.radios { margin: 5px 0 9px; color: #8a8a8a; }
.lab { flex: 1; border-bottom: 1px solid #d0d4d8; padding-left: 2px; line-height: 17px; }
.half { width: 172px; flex: none; }
.row label:not(.lab), .opt label, label.opt { display: flex; align-items: center; gap: 6px; }
.level { margin: 53px 0 8px; }
.level .box { width: 77px; }
.props { margin: 9px 0 0; }
.balance .lab { display: flex; justify-content: space-between; align-items: center; padding-right: 3px; }
.balance .amount { width: 83px; }
.balance .select { width: 77px; }
.arr { width: 15px; height: 10px; }
.box { width: 160px; height: 17px; padding: 0 2px; border: 1px solid #adadad; border-radius: 1px; background: #fff; }
.box.ro { background: #e6e6e6; }
.box.hot { background: #ffed9c; }
.select { position: relative; width: 160px; height: 17px; }
.select select { appearance: none; width: 100%; height: 17px; padding: 0 1px; border: 1px solid #adadad; background: #fff; line-height: 15px; }
.select::after { content: ""; position: absolute; right: 2px; top: 6px; border: solid transparent; border-width: 5px 5px 0; border-top-color: #222; pointer-events: none; }
input[type=checkbox], input[type=radio] { appearance: none; flex: none; display: grid; place-items: center; width: 14px; height: 14px; margin: 0 0 0 3px; border: 1px solid #777; background: #fff; }
input[type=radio] { border-radius: 50%; border-color: #bbb; background: #f2f2f2; }
input[type=radio]:checked::after { content: ""; width: 4px; height: 4px; border-radius: 50%; background: #888; }
input[type=checkbox]:checked::after { content: ""; width: 8px; height: 4px; margin-bottom: 2px; border: solid #000; border-width: 0 0 2px 2px; transform: rotate(-48deg); }

.tree { display: flex; width: 303px; height: 600px; border-left: 1px solid #000; }
.tree ul { flex: 1; min-width: 0; overflow: hidden; white-space: nowrap; }
.tree li { height: 18px; line-height: 19px; }
.tree .l0 { padding-left: 2px; background: #bebebe; }
.tree .l1 { padding-left: 19px; color: #00008c; }
.tree .l2 { padding-left: 37px; color: #3248c8; }
.tree .l3 { padding-left: 55px; }
.tree .vscroll { width: 19px; }

.drawers { width: 106px; margin-left: 8px; font-size: 10px; line-height: 12px; }
.lid { height: 10px; margin: 1px 6px 0; border: 3px solid #999; border-top: 2px solid #222; background: #c8c8c8; }
.drawers button {
  display: grid;
  place-items: center;
  width: 106px;
  height: 79px;
  padding: 5px 2px 2px;
  border: 2px solid #8a8a8a;
  border-bottom-color: #5a5a5a;
  border-right-color: #6a6a6a;
  background:
    linear-gradient(#aaa, #dcdcdc 5px, #f0f0f0) center 0 / 36px 10px no-repeat,
    linear-gradient(#777, #b8b8b8) center 10px / 34px 5px no-repeat,
    linear-gradient(#c6c6c6, #b8b8b8 30%, #c8c8c8 80%, #b2b2b2);
}
.drawers .open {
  height: 71px;
  border-bottom-color: #999;
  background:
    linear-gradient(#ccc, #e8e8e8 5px, #f6f6f6) center 0 / 38px 10px no-repeat,
    linear-gradient(#888, #d0d0d0) center 10px / 36px 5px no-repeat,
    linear-gradient(#ddd, #cdcdcd 30%, #dedede 80%, #c4c4c4);
}

/* Account balance */
.dialog { left: 144px; right: 98px; top: 394px; height: 421px; box-shadow: 0 0 0 1px #d8d8d8; }
.dialog-body { flex: 1; padding: 12px 16px 0 11px; }
.filters { display: flex; justify-content: space-between; height: 91px; }
.account { display: flex; height: 18px; width: 505px; }
.account .lab { flex: none; width: 96px; }
.account .box { width: 123px; }
.account .name { flex: 1; margin-left: 1px; padding-left: 10px; border-bottom: 1px solid #d0d4d8; }
.options { width: 260px; }
.opt { display: flex; align-items: center; height: 18px; }
.opt input[type=checkbox] { margin-left: 0; }
.dates { display: flex; height: 17px; margin: 6px 0 5px; padding-left: 18px; }
.dates .lab { flex: none; width: 39px; }
.dates .box { width: 66px; }
.dates .box + .lab { margin-left: 3px; width: 40px; }
.last { margin-bottom: 5px; gap: 8px; }
.last > label:first-child { width: 86px; }
.count { width: 33px; padding-left: 3px; color: #fff; background: linear-gradient(#3a97ff, #3a97ff) 3px 0 / 15px 100% no-repeat, linear-gradient(#ffed9c, #ffed9c); }

.grid { display: flex; }
table { flex: 1; width: 100%; table-layout: fixed; border-collapse: collapse; white-space: nowrap; }
th { height: 22px; padding: 0 4px 3px; font-weight: normal; text-align: left; color: #333; }
th, td { border: 1px solid #c8c8c8; background: #e5e5e5; overflow: hidden; }
td { height: 18px; padding: 0 2px; line-height: 17px; }
td:first-child { padding-left: 3px; color: #333; }
.n { text-align: right; padding-right: 4px; }
td .arr { float: left; margin: 3px 3px 0 -1px; }
.dim td { color: #888; }
.dim td:first-child { color: #333; }
.sel td { background: #fedb80; }
.sel td:first-child { background: linear-gradient(135deg, #b8bfca, #dde1e8); }
.c1 { width: 20px; }
.c2 { width: 111px; }
.c3 { width: 89px; }
.c4 { width: 44px; }
.c5 { width: 80px; }
.c6 { width: 58px; }
.c7 { width: 147px; }
.c8 { width: 119px; }
.c10 { width: 101px; }
.c11 { width: 32px; }
.grid .vscroll { width: 20px; margin-top: 22px; }

.hscroll { display: flex; height: 21px; margin: 22px 21px 0 20px; border: 1px solid #a0a0a0; border-top-width: 2px; background: #fafafa; }
.hscroll button { width: 18px; display: grid; place-items: center; background: #e3e3e3; }
.hscroll .left::after, .hscroll .right::after { content: ""; border: solid transparent; border-width: 4px 4px 4px 0; border-right-color: #555; }
.hscroll .right::after { border-width: 4px 0 4px 4px; border-left-color: #555; }
.hthumb { flex: 1; margin-right: 37px; display: grid; place-items: center; border: 1px solid #a8a8a8; background: #e1e1e1; }
.actions { display: flex; align-items: center; gap: 18px; margin-top: 52px; height: 32px; padding-left: 1px; }
.back { width: 32px; height: 32px; }
.ok { width: 79px; height: 23px; border: 1px solid #666; background: linear-gradient(#ffc840, #f09018) left / 8px 100% no-repeat, linear-gradient(#fae3a8, #f2cc54); }

/* Message log and status bar */
.messages { display: flex; justify-content: space-between; align-items: flex-start; height: 26px; margin: 0 2px; border-top: 1px solid #b0b0b0; border-bottom: 1px solid #c4c4c4; background: #f1f1f1; }
.log { width: 226px; height: 22px; margin-left: 6px; padding-left: 7px; border: 1px solid #808080; border-bottom: 0; border-radius: 3px 3px 0 0; background: #f7f7f7; }
.status {
  position: relative;
  display: flex;
  height: 47px;
  padding: 6px 8px 0 6px;
  border: solid #b0b0b0;
  border-width: 0 2px 3px;
  background: linear-gradient(#d4d4d4, #fcfcfc 14px, #fafafa);
}
.status i { display: block; height: 15px; margin-bottom: 5px; border: 1px solid #b4b4b4; border-radius: 2px; background: #e6e6e6; }
.s1 { flex: 510; }
.s2 { flex: 255; margin-right: 4px; }
.s3 { flex: 252; }
.clock { width: 100px; text-align: center; padding-right: 4px; }
.clock span { display: block; height: 21px; line-height: 14px; }
.logo { display: flex; width: 132px; padding: 3px 0 0 25px; }
.logo b { font: 800 25px/24px "Open Sans", sans-serif; color: #999; }
.logo span { font: 10px/10px "Noto Sans", sans-serif; color: #999; margin-left: 2px; }
.logo strong { display: block; font: bold 15px/13px "Noto Sans", sans-serif; color: #f0a81e; }
.resize { position: absolute; right: 1px; bottom: 1px; width: 12px; height: 12px; }
```
